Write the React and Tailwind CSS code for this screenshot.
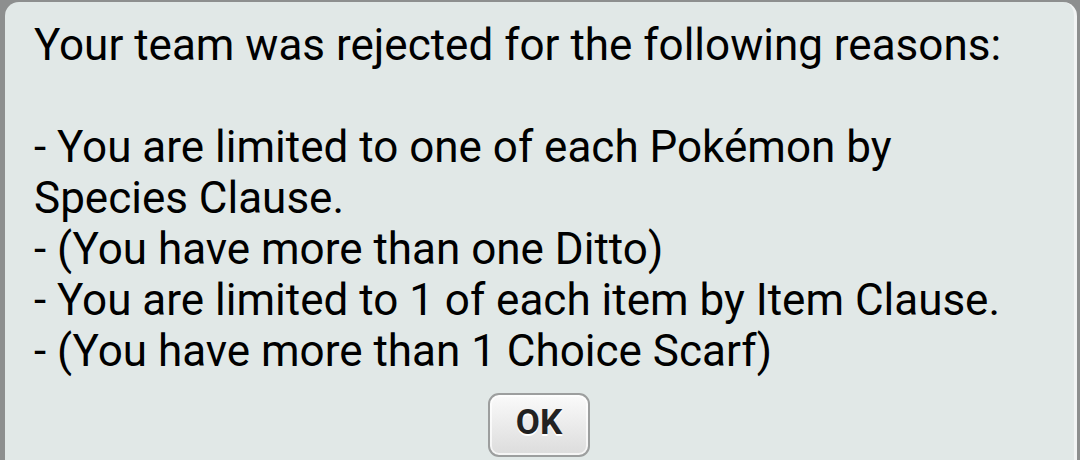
import React from "react";

export default function App() {
  const lines = [
    "Your team was rejected for the following reasons:",
    "\u00a0",
    "- You are limited to one of each Pokémon by",
    "Species Clause.",
    "- (You have more than one Ditto)",
    "- You are limited to 1 of each item by Item Clause.",
    "- (You have more than 1 Choice Scarf)",
  ];
  return (
    <div className="w-[1080px] h-[460px] overflow-hidden bg-[#8d8f8f] pt-[2px] pl-[5px] pr-[3px]">
      <div className="h-[480px] rounded-t-[14px] bg-[#e1e8e7] border-r-[3px] border-[#f2f4f4] pl-[29px] pt-[18px] font-['Roboto',sans-serif] text-black">
        <div className="text-[44px] leading-[51px]">
          {lines.map((l, i) => (
            <div key={i}>{l}</div>
          ))}
        </div>
        <div className="flex mt-[16px] pl-[454px]">
          <button className="w-[102px] h-[64px] rounded-[11px] border-2 border-[#9c9e9e] bg-gradient-to-b from-[#fafafa] to-[#dcdcdc] shadow-[inset_0_0_0_2px_rgba(255,255,255,0.7)] text-[35px] font-bold text-[#222] [text-shadow:0_2px_0_#ffffff] flex items-center justify-center pb-[4px]">
            OK
          </button>
        </div>
      </div>
    </div>
  );
}
